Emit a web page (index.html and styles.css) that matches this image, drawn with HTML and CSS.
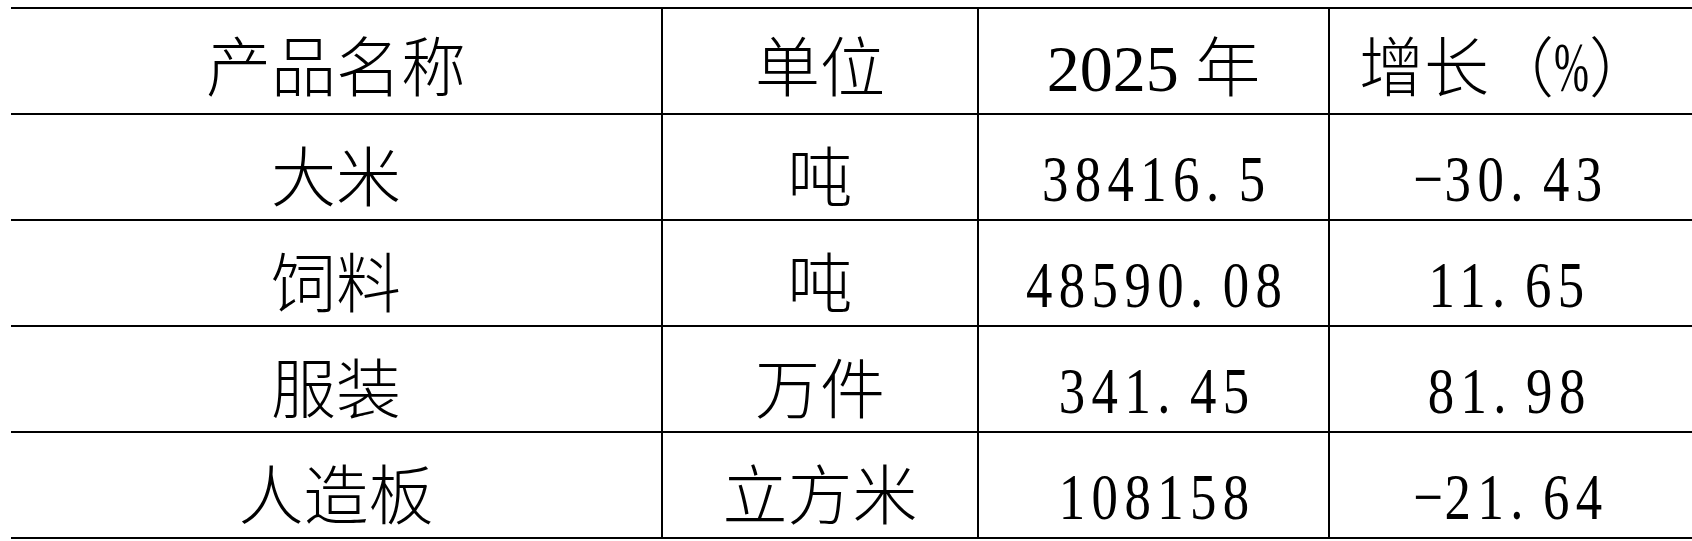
FILE: index.html
```html
<!DOCTYPE html>
<html lang="zh-CN">
<head>
<meta charset="utf-8">
<title>产品产量表</title>
<link rel="stylesheet" href="styles.css">
</head>
<body>
<table class="grid">
  <colgroup>
    <col class="c1"><col class="c2"><col class="c3"><col class="c4">
  </colgroup>
  <thead>
    <tr>
      <th>产品名称</th>
      <th>单位</th>
      <th><span class="yr">2025 </span>年</th>
      <th class="last">增长（<span class="pct">%</span>）</th>
    </tr>
  </thead>
  <tbody>
    <tr>
      <td>大米</td>
      <td>吨</td>
      <td><span class="num">38416<span class="h">.</span>5</span></td>
      <td class="last"><span class="num"><span class="m">−</span>30<span class="h">.</span>43</span></td>
    </tr>
    <tr>
      <td>饲料</td>
      <td>吨</td>
      <td><span class="num">48590<span class="h">.</span>08</span></td>
      <td class="last"><span class="num">11<span class="h">.</span>65</span></td>
    </tr>
    <tr>
      <td>服装</td>
      <td>万件</td>
      <td><span class="num">341<span class="h">.</span>45</span></td>
      <td class="last"><span class="num">81<span class="h">.</span>98</span></td>
    </tr>
    <tr>
      <td>人造板</td>
      <td>立方米</td>
      <td><span class="num">108158</span></td>
      <td class="last"><span class="num"><span class="m">−</span>21<span class="h">.</span>64</span></td>
    </tr>
  </tbody>
</table>
</body>
</html>
```

FILE: styles.css
```css
html, body {
  margin: 0;
  padding: 0;
  background: #fff;
  overflow: hidden;
}

body {
  padding: 7px 0 0 11px;
}

.grid {
  border-collapse: separate;
  border-spacing: 0;
  table-layout: fixed;
  width: 1682px;
  font-family: "Noto Sans CJK SC", "Noto Sans", sans-serif;
  font-weight: 300;
  font-size: 65px;
  line-height: 65px;
  color: #000;
}

.c1 { width: 650px; }
.c2 { width: 316px; }
.c3 { width: 351px; }
.c4 { width: 365px; }

.grid th,
.grid td {
  font-weight: 300;
  text-align: center;
  vertical-align: top;
  white-space: nowrap;
  border-bottom: 2px solid #000;
  padding: 26px 0 13px;
}

.grid th {
  border-top: 2px solid #000;
  padding: 22px 0 17px;
}

.grid th + th,
.grid td + td {
  border-left: 2px solid #000;
}

.grid .last {
  padding-right: 10px;
}

.yr,
.num,
.pct {
  font-family: "Liberation Serif", "Times New Roman", serif;
  font-weight: 400;
  font-size: 66px;
  line-height: 0;
}

/* condensed half-width digits, as in the Song-style source */
.num {
  display: inline-block;
  letter-spacing: 8px;
  padding-left: 8px;
  transform: scaleX(0.8);
}

.h {
  display: inline-block;
  width: 41px;
  letter-spacing: 0;
  text-align: left;
}

.m {
  display: inline-block;
  width: 41px;
  letter-spacing: 0;
  text-align: center;
}

.pct {
  display: inline-block;
  width: 0.5em;
  text-align: left;
  font-size: 70px;
  transform: scaleX(0.6);
  transform-origin: left center;
}
```
